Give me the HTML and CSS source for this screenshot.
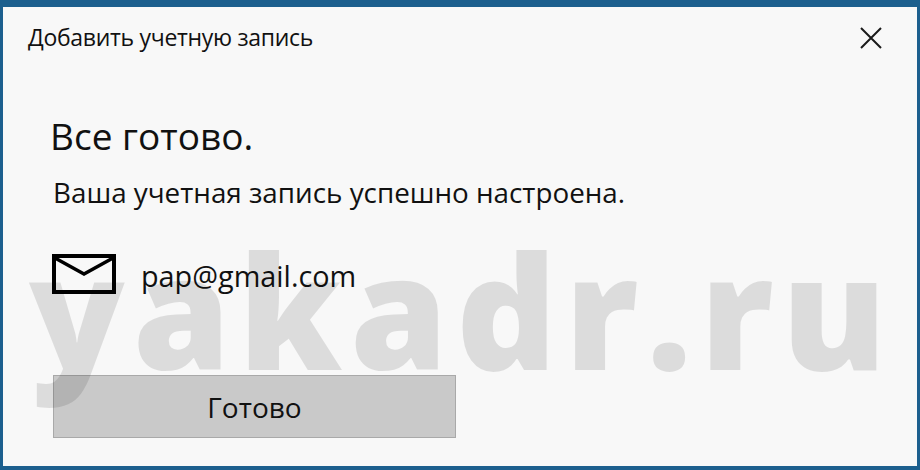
FILE: index.html
```html
<!DOCTYPE html>
<html lang="ru">
<head>
  <meta charset="UTF-8">
  <title>Добавить учетную запись</title>
  <link rel="stylesheet" href="styles.css">
</head>
<body>
  <div class="window">
    <div class="title-bar">
      <span class="title">Добавить учетную запись</span>
      <svg class="close" width="22" height="22" viewBox="0 0 22 22">
        <path d="M1 1 L21 21 M21 1 L1 21" fill="none" stroke="#1a1a1a" stroke-width="2"/>
      </svg>
    </div>
    <div class="content">
      <h1>Все готово.</h1>
      <p class="status">Ваша учетная запись успешно настроена.</p>
      <div class="account">
        <svg class="mail" width="64" height="40" viewBox="0 0 64 40">
          <rect x="2" y="2" width="60" height="36" fill="none" stroke="#000" stroke-width="4"/>
          <path d="M3 4 L32 20 L61 4" fill="none" stroke="#000" stroke-width="3.5"/>
        </svg>
        <span class="email">pap@gmail.com</span>
      </div>
      <button class="done-btn">Готово</button>
    </div>
    <div class="watermark">yakadr.ru</div>
  </div>
</body>
</html>
```
FILE: styles.css
```css
html, body {
  margin: 0;
  padding: 0;
}
body {
  width: 920px;
  height: 470px;
  overflow: hidden;
  font-family: 'Open Sans', 'Noto Sans', sans-serif;
  color: #111;
}
.window {
  position: relative;
  box-sizing: border-box;
  width: 920px;
  height: 470px;
  background: #f8f8f8;
  border-style: solid;
  border-color: #1c5f8e;
  border-width: 7px 3px 4px 3px;
  overflow: hidden;
}
.title-bar {
  display: flex;
  align-items: center;
  justify-content: space-between;
  padding: 15px 35px 0 25px;
  height: 30px;
}
.close {
  margin-top: 2px;
}
.title {
  font-size: 23px;
  letter-spacing: -0.3px;
}
.content {
  padding: 59px 0 0 50px;
}
h1 {
  margin: 0 0 0 -3px;
  font-size: 37px;
  font-weight: 400;
  line-height: 50px;
}
.status {
  margin: 12px 0 0;
  font-size: 27.8px;
  line-height: 38px;
}
.account {
  display: flex;
  align-items: center;
  gap: 25px;
  margin: 41px 0 0 -1px;
}
.email {
  padding-top: 4px;
  font-size: 28.8px;
  line-height: 40px;
}
.done-btn {
  display: block;
  box-sizing: border-box;
  width: 403px;
  height: 63px;
  margin-top: 79px;
  background: #c9c9c9;
  border: 1px solid #a9a9a9;
  color: #111;
  font-family: inherit;
  font-size: 28px;
}
.watermark {
  position: absolute;
  left: 26px;
  top: 202px;
  font-size: 157px;
  font-weight: 800;
  line-height: 200px;
  letter-spacing: 8px;
  color: rgba(0, 0, 0, 0.11);
  white-space: nowrap;
  pointer-events: none;
}
```
